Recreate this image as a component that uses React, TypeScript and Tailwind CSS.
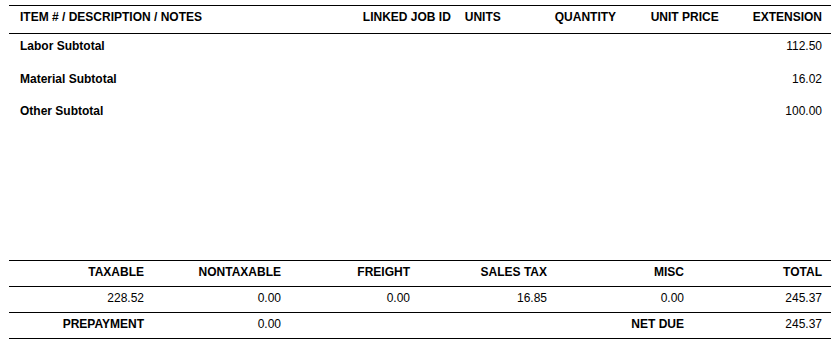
import React from "react";

const font = { fontFamily: '"Liberation Sans", Arial, sans-serif' };

const bodyRows = [
  { label: "Labor Subtotal", value: "112.50" },
  { label: "Material Subtotal", value: "16.02" },
  { label: "Other Subtotal", value: "100.00" },
];

const cols = "grid grid-cols-[144px_137px_129px_137px_137px_138px]";
const cell = "pr-[9px] text-right";

export default function App() {
  return (
    <div
      className="w-[838px] h-[341px] bg-white text-black text-[12px] leading-[14px] overflow-hidden"
      style={font}
    >
      <div className="ml-[9px] w-[822px] pt-[5px]">
        {/* Header */}
        <div className="flex h-[29px] border-y border-black pt-[4px] font-bold">
          <div className="w-[354px] pl-[11px]">ITEM # / DESCRIPTION / NOTES</div>
          <div className="w-[102px]">LINKED JOB ID</div>
          <div className="w-[90px]">UNITS</div>
          <div className="w-[96px]">QUANTITY</div>
          <div className="w-[102px]">UNIT PRICE</div>
          <div className="flex-1 pr-[9px] text-right">EXTENSION</div>
        </div>

        {/* Body */}
        <div className="h-[226px] pt-[5px]">
          {bodyRows.map((r) => (
            <div key={r.label} className="flex h-[32.5px] justify-between pl-[11px] pr-[9px]">
              <span className="font-bold">{r.label}</span>
              <span>{r.value}</span>
            </div>
          ))}
        </div>

        {/* Totals */}
        <div className="border-t border-black">
          <div className={`${cols} h-[26px] border-b border-black pt-[4px] font-bold`}>
            <div className={cell}>TAXABLE</div>
            <div className={cell}>NONTAXABLE</div>
            <div className={cell}>FREIGHT</div>
            <div className={cell}>SALES TAX</div>
            <div className={cell}>MISC</div>
            <div className={cell}>TOTAL</div>
          </div>
          <div className={`${cols} h-[26px] border-b border-black pt-[4px]`}>
            <div className={cell}>228.52</div>
            <div className={cell}>0.00</div>
            <div className={cell}>0.00</div>
            <div className={cell}>16.85</div>
            <div className={cell}>0.00</div>
            <div className={cell}>245.37</div>
          </div>
          <div className={`${cols} h-[26px] border-b border-black pt-[4px]`}>
            <div className={`${cell} font-bold`}>PREPAYMENT</div>
            <div className={cell}>0.00</div>
            <div className={cell}></div>
            <div className={cell}></div>
            <div className={`${cell} font-bold`}>NET DUE</div>
            <div className={cell}>245.37</div>
          </div>
        </div>
      </div>
    </div>
  );
}
